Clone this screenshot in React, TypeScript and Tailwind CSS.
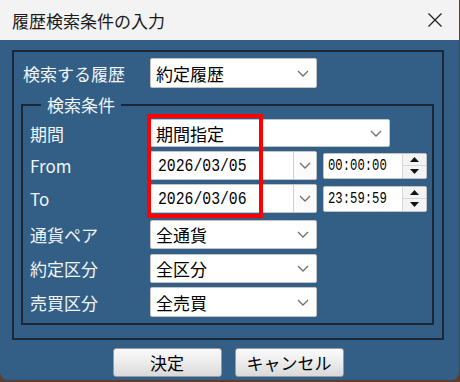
import React from 'react'

const font = 'font-["Noto_Sans_CJK_JP",sans-serif]'

const Chevron = () => (
  <svg width="12" height="7" viewBox="0 0 12 7" className="shrink-0">
    <polyline points="1,1 6,6 11,1" fill="none" stroke="#707070" strokeWidth="1.3" />
  </svg>
)

const Combo = ({ value, className }: { value: string; className: string }) => (
  <div
    className={`flex items-center justify-between bg-white border border-[#c3c3c3] rounded-[2px] pl-[5px] pr-[7px] text-[17px] leading-none text-black ${className}`}
  >
    <span>{value}</span>
    <Chevron />
  </div>
)

const DateCombo = ({ value }: { value: string }) => (
  <div className="flex h-[29px] w-[167px] bg-white border border-[#c3c3c3] rounded-[2px]">
    <div className="flex-1 flex items-center pl-[7px] overflow-hidden">
      <span className='inline-block origin-left scale-x-[0.82] text-[18px] leading-none text-black font-["Liberation_Mono",monospace]'>
        {value}
      </span>
    </div>
    <div className="w-[23px] flex items-center justify-center border-l border-[#d0d0d0] bg-[#fbfbfb]">
      <Chevron />
    </div>
  </div>
)

const TimeBox = ({ value }: { value: string }) => (
  <div className="flex h-[26px] w-[104px] ml-[6px] bg-white border border-[#c3c3c3] rounded-[2px]">
    <div className="flex-1 flex items-center pl-[4px] overflow-hidden">
      <span className='inline-block origin-left scale-x-[0.72] text-[17px] leading-none text-black font-["Liberation_Mono",monospace]'>
        {value}
      </span>
    </div>
    <div className="w-[24px] flex flex-col border-l border-[#d6d6d6]">
      <div className="flex-1 flex items-center justify-center bg-[#f4f4f4] border-b border-[#d6d6d6]">
        <svg width="9" height="5" viewBox="0 0 9 5">
          <polygon points="0,5 4.5,0 9,5" fill="#111" />
        </svg>
      </div>
      <div className="flex-1 flex items-center justify-center bg-[#f4f4f4]">
        <svg width="9" height="5" viewBox="0 0 9 5">
          <polygon points="0,0 4.5,5 9,0" fill="#111" />
        </svg>
      </div>
    </div>
  </div>
)

const Label = ({ text }: { text: string }) => (
  <div className="w-[120px] shrink-0 text-[17px] leading-none text-[#f2f5f8]">{text}</div>
)

export default function App() {
  return (
    <div className={`w-[460px] h-[382px] bg-[#5a3d34] ${font}`}>
      <div className="w-[459px] h-[380px] bg-[#335f86] rounded-b-[8px] overflow-hidden">
        {/* Title bar */}
        <div className="h-[40px] bg-[#f3f3f3] flex items-center justify-between pl-[12px] pr-[16px]">
          <span className="text-[17px] text-[#1b1b1b] leading-none">履歴検索条件の入力</span>
          <svg width="16" height="16" viewBox="0 0 16 16">
            <path d="M1.5 1.5 L14.5 14.5 M14.5 1.5 L1.5 14.5" stroke="#222" strokeWidth="1.3" />
          </svg>
        </div>

        <div className="pt-[10px] px-[12px]">
          {/* Outer group */}
          <div className="w-[432px] border-2 border-[#1c2835]">
            <div className="flex items-center pt-[6px] pl-[9px]">
              <div className="w-[127px] text-[17px] leading-none text-[#f2f5f8]">検索する履歴</div>
              <Combo value="約定履歴" className="h-[30px] w-[167px]" />
            </div>

            <fieldset className="mt-[5px] ml-[7px] mr-[8px] mb-[13px] border-2 border-[#1c2835] px-0 pb-[6px]">
              <legend className="ml-[18px] px-[6px] text-[17px] leading-[24px] text-[#f2f5f8]">検索条件</legend>
              <div className="relative pl-[7px] pt-[2px] flex flex-col">
                <div className="flex items-center">
                  <Label text="期間" />
                  <Combo value="期間指定" className="h-[28px] w-[240px]" />
                </div>
                <div className="flex items-center mt-[4px]">
                  <Label text="From" />
                  <DateCombo value="2026/03/05" />
                  <TimeBox value="00:00:00" />
                </div>
                <div className="flex items-center mt-[4px]">
                  <Label text="To" />
                  <DateCombo value="2026/03/06" />
                  <TimeBox value="23:59:59" />
                </div>
                <div className="flex items-center mt-[7px]">
                  <Label text="通貨ペア" />
                  <Combo value="全通貨" className="h-[29px] w-[167px]" />
                </div>
                <div className="flex items-center mt-[5px]">
                  <Label text="約定区分" />
                  <Combo value="全区分" className="h-[29px] w-[167px]" />
                </div>
                <div className="flex items-center mt-[4px]">
                  <Label text="売買区分" />
                  <Combo value="全売買" className="h-[30px] w-[167px]" />
                </div>

                {/* highlight */}
                <div className="absolute left-[124px] top-[-3px] w-[116px] h-[104px] border-4 border-[#ff0000] pointer-events-none" />
              </div>
            </fieldset>
          </div>

          {/* Buttons */}
          <div className="flex justify-center gap-[13px] pt-[8px] pr-[3px]">
            {['決定', 'キャンセル'].map((t) => (
              <div
                key={t}
                className="w-[109px] h-[29px] flex items-center justify-center rounded-[3px] border border-[#9a9a9a] bg-gradient-to-b from-[#fafafa] via-[#ececec] to-[#d9d9d9] text-[17px] leading-none text-black"
              >
                {t}
              </div>
            ))}
          </div>
        </div>
      </div>
    </div>
  )
}
